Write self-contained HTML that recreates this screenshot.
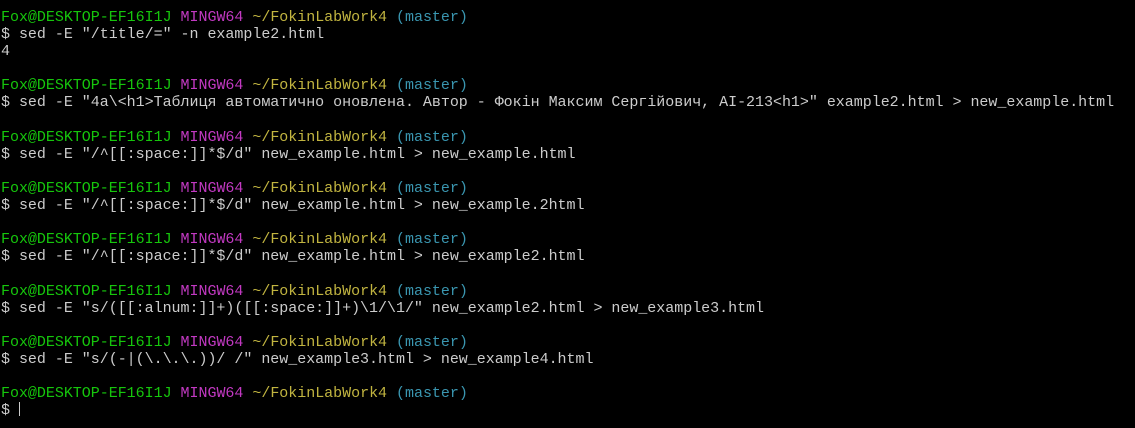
<!DOCTYPE html>
<html><head><meta charset="utf-8"><style>
html,body{margin:0;background:#000;width:1135px;height:428px;overflow:hidden}
pre{margin:0;padding:9px 0 0 1px;font-family:"Liberation Mono","DejaVu Sans Mono",monospace;font-size:15px;line-height:17.1px;letter-spacing:-0.025px;color:#cccccc;white-space:pre}
.g{color:#16c60c}.m{color:#c239c2}.y{color:#c1b440}.c{color:#3a96b0}
.cur{display:inline-block;width:1px;height:14px;background:#ccc;vertical-align:-2px}
</style></head><body><pre><span class="g">Fox@DESKTOP-EF16I1J</span> <span class="m">MINGW64</span> <span class="y">~/FokinLabWork4</span> <span class="c">(master)</span>
$ sed -E "/title/=" -n example2.html
4

<span class="g">Fox@DESKTOP-EF16I1J</span> <span class="m">MINGW64</span> <span class="y">~/FokinLabWork4</span> <span class="c">(master)</span>
$ sed -E "4a\&lt;h1&gt;Таблиця автоматично оновлена. Автор - Фокін Максим Сергійович, АІ-213&lt;h1&gt;" example2.html &gt; new_example.html

<span class="g">Fox@DESKTOP-EF16I1J</span> <span class="m">MINGW64</span> <span class="y">~/FokinLabWork4</span> <span class="c">(master)</span>
$ sed -E "/^[[:space:]]*$/d" new_example.html &gt; new_example.html

<span class="g">Fox@DESKTOP-EF16I1J</span> <span class="m">MINGW64</span> <span class="y">~/FokinLabWork4</span> <span class="c">(master)</span>
$ sed -E "/^[[:space:]]*$/d" new_example.html &gt; new_example.2html

<span class="g">Fox@DESKTOP-EF16I1J</span> <span class="m">MINGW64</span> <span class="y">~/FokinLabWork4</span> <span class="c">(master)</span>
$ sed -E "/^[[:space:]]*$/d" new_example.html &gt; new_example2.html

<span class="g">Fox@DESKTOP-EF16I1J</span> <span class="m">MINGW64</span> <span class="y">~/FokinLabWork4</span> <span class="c">(master)</span>
$ sed -E "s/([[:alnum:]]+)([[:space:]]+)\1/\1/" new_example2.html &gt; new_example3.html

<span class="g">Fox@DESKTOP-EF16I1J</span> <span class="m">MINGW64</span> <span class="y">~/FokinLabWork4</span> <span class="c">(master)</span>
$ sed -E "s/(-|(\.\.\.))/ /" new_example3.html &gt; new_example4.html

<span class="g">Fox@DESKTOP-EF16I1J</span> <span class="m">MINGW64</span> <span class="y">~/FokinLabWork4</span> <span class="c">(master)</span>
$ <span class="cur"></span></pre></body></html>
